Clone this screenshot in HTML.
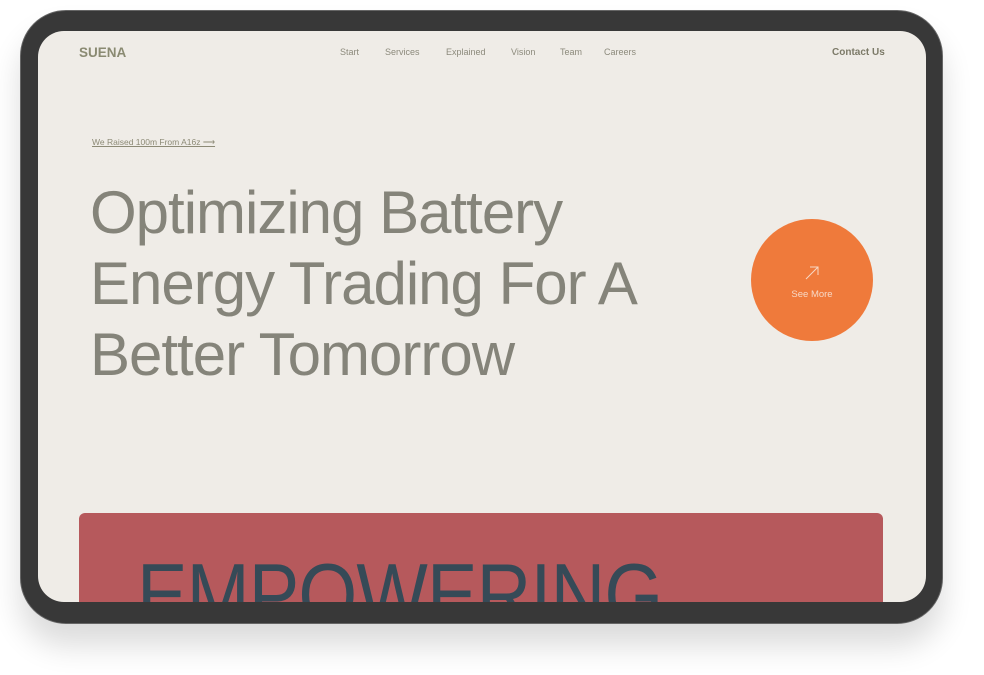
<!DOCTYPE html>
<html><head><style>
body{margin:0;width:984px;height:675px;background:#fff;overflow:hidden;font-family:"Liberation Sans",sans-serif;position:relative}
.frame{position:absolute;left:20px;top:10px;width:923px;height:614px;background:#383838;border-radius:46px;box-shadow:0 22px 30px rgba(0,0,0,.14);border:1px solid #666;box-sizing:border-box}
.screen{position:absolute;left:38px;top:31px;width:888px;height:571px;background:#efece7;border-radius:26px;overflow:hidden}
.logo{position:absolute;left:41px;top:14px;font-weight:bold;font-size:13.5px;color:#8a8a72}
.nav{position:absolute;top:16px;font-size:9px;color:#8c8a7c}
.contact{position:absolute;left:794px;top:16px;font-size:10px;font-weight:bold;color:#7c7a68}
.raised{position:absolute;left:54px;top:106px;font-size:8.5px;color:#8c8a76;text-decoration:underline}
.h{position:absolute;left:52px;top:146px;font-size:60px;line-height:71px;color:#85847a;letter-spacing:-1px;font-weight:300;white-space:nowrap}
.circle{position:absolute;left:713px;top:188px;width:122px;height:122px;border-radius:50%;background:#ef7a3b;color:#f7d8c5;font-size:9.5px;text-align:center}
.red{position:absolute;left:41px;top:482px;width:804px;height:120px;background:#b6595c;border-radius:6px;overflow:hidden}
.emp{position:absolute;left:58px;top:38px;font-size:88px;color:#364a57;transform:scaleX(.86);transform-origin:left top;line-height:1;letter-spacing:-1px}
</style></head><body>
<div class="frame"></div>
<div class="screen">
<div class="logo">SUENA</div>
<div class="nav" style="left:302px">Start</div>
<div class="nav" style="left:347px">Services</div>
<div class="nav" style="left:408px">Explained</div>
<div class="nav" style="left:473px">Vision</div>
<div class="nav" style="left:522px">Team</div>
<div class="nav" style="left:566px">Careers</div>
<div class="contact">Contact Us</div>
<div class="raised">We Raised 100m From A16z ⟶</div>
<div class="h">Optimizing Battery<br>Energy Trading For A<br>Better Tomorrow</div>
<div class="circle">
<svg style="position:absolute;left:53px;top:46px" width="16" height="16" viewBox="0 0 16 16"><path d="M2 14L14 2M6 2h8v8" fill="none" stroke="#f7d8c5" stroke-width="1"/></svg>
<div style="position:absolute;left:0;right:0;top:70px">See More</div>
</div>
<div class="red"><div class="emp">EMPOWERING</div></div>
</div>
</body></html>
